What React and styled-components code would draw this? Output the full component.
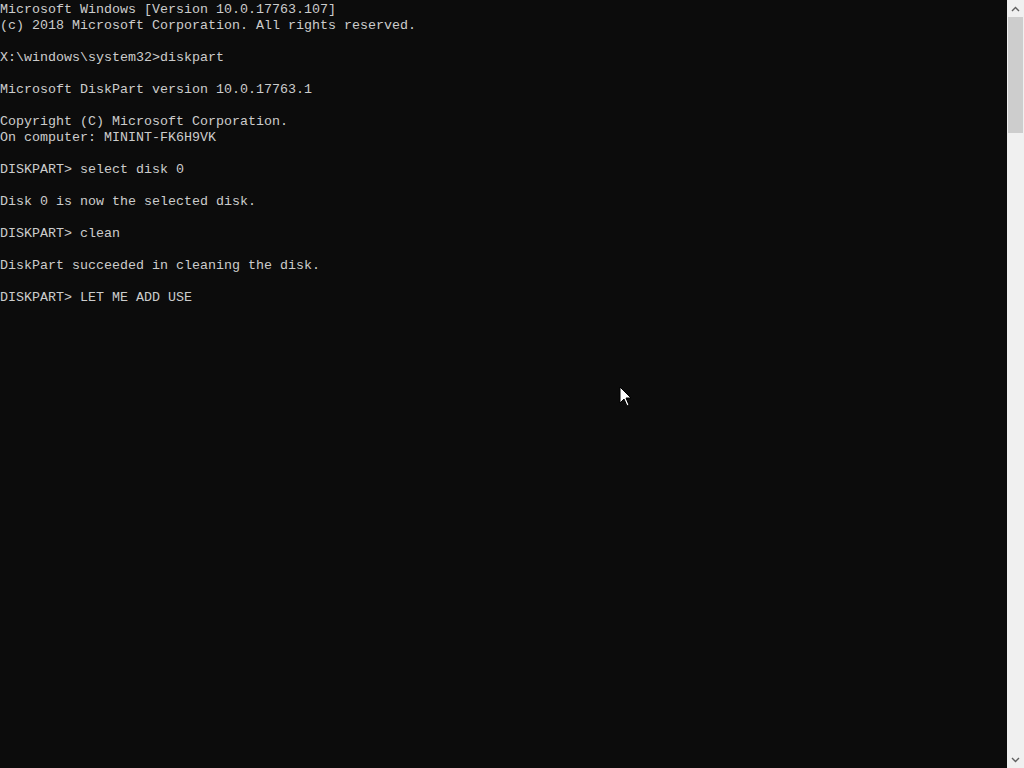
import React from 'react';
import styled, { createGlobalStyle } from 'styled-components';

const GlobalStyle = createGlobalStyle`
  html, body { margin: 0; padding: 0; height: 100%; background: #0c0c0c; }
  #root { height: 100%; }
`;

const lines = [
  'Microsoft Windows [Version 10.0.17763.107]',
  '(c) 2018 Microsoft Corporation. All rights reserved.',
  '',
  'X:\\windows\\system32>diskpart',
  '',
  'Microsoft DiskPart version 10.0.17763.1',
  '',
  'Copyright (C) Microsoft Corporation.',
  'On computer: MININT-FK6H9VK',
  '',
  'DISKPART> select disk 0',
  '',
  'Disk 0 is now the selected disk.',
  '',
  'DISKPART> clean',
  '',
  'DiskPart succeeded in cleaning the disk.',
  '',
  'DISKPART> LET ME ADD USE',
];

const App = () => (
  <>
    <GlobalStyle />
    <Window>
      <Console>
        {lines.map((l, i) => (
          <Line key={i}>{l || '\u00a0'}</Line>
        ))}
        <Cursor width="14" height="22" viewBox="0 0 14 22">
          <path d="M1 1 L1 17 L5 13 L8 20 L10 19 L7 12 L12 12 Z" fill="#fff" stroke="#000" strokeWidth="1" />
        </Cursor>
      </Console>
      <ScrollBar>
        <Arrow>
          <svg width="9" height="6" viewBox="0 0 9 6">
            <path d="M1 5 L4.5 1.5 L8 5" fill="none" stroke="#606060" strokeWidth="1.4" />
          </svg>
        </Arrow>
        <Track>
          <Thumb />
        </Track>
        <Arrow>
          <svg width="9" height="6" viewBox="0 0 9 6">
            <path d="M1 1 L4.5 4.5 L8 1" fill="none" stroke="#606060" strokeWidth="1.4" />
          </svg>
        </Arrow>
      </ScrollBar>
    </Window>
  </>
);

export default App;

const Window = styled.div`
  display: grid;
  grid-template-columns: 1fr 17px;
  height: 768px;
  width: 1024px;
  background: #0c0c0c;
`;

const Console = styled.div`
  position: relative;
  padding-top: 2px;
  font-family: "Liberation Mono", "DejaVu Sans Mono", monospace;
  font-size: 13.333px;
  line-height: 16px;
  color: #cccccc;
  overflow: hidden;
`;

const Line = styled.div`
  white-space: pre;
  height: 16px;
`;

const Cursor = styled.svg`
  position: absolute;
  left: 619px;
  top: 386px;
`;

const ScrollBar = styled.div`
  display: flex;
  flex-direction: column;
  background: #f0f0f0;
`;

const Arrow = styled.div`
  height: 17px;
  display: flex;
  align-items: center;
  justify-content: center;
`;

const Track = styled.div`
  flex: 1;
  padding: 0 1px;
`;

const Thumb = styled.div`
  height: 116px;
  background: #cdcdcd;
`;
